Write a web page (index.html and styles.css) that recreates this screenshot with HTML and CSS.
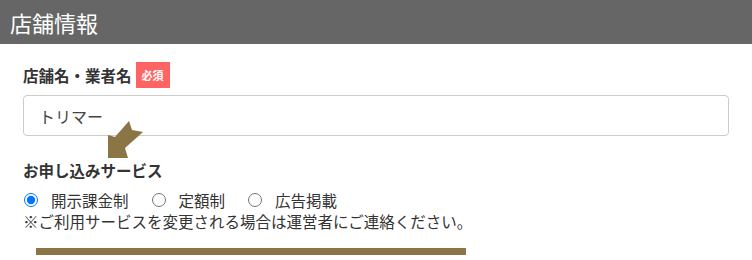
FILE: index.html
```html
<!DOCTYPE html>
<html lang="ja">
<head>
<meta charset="utf-8">
<title>店舗情報</title>
<link rel="stylesheet" href="styles.css">
</head>
<body>
<div class="panel">
  <div class="panel-header">店舗情報</div>
  <div class="panel-body">
    <div class="field-label">
      <span>店舗名・業者名</span>
      <span class="badge">必須</span>
    </div>
    <input class="text-input" type="text" value="トリマー">
    <div class="section-label">お申し込みサービス</div>
    <div class="radio-row">
      <label class="radio-item"><input type="radio" name="svc" checked><span>開示課金制</span></label>
      <label class="radio-item"><input type="radio" name="svc"><span>定額制</span></label>
      <label class="radio-item"><input type="radio" name="svc"><span>広告掲載</span></label>
    </div>
    <div class="note">※ご利用サービスを変更される場合は運営者にご連絡ください。</div>
    <div class="highlight-bar"></div>
    <svg class="arrow" width="42" height="44" viewBox="0 0 42 44">
      <polygon points="3,17 10,19 24,3 27,12 38,14 20,30 23,40 3,40" fill="#8c7545"/>
    </svg>
  </div>
</div>
</body>
</html>
```

FILE: styles.css
```css
html, body {
  margin: 0;
  padding: 0;
  background: #fff;
}
body {
  font-family: "Noto Sans CJK JP", "Noto Sans", sans-serif;
  color: #333;
}
.panel-header {
  height: 44px;
  line-height: 44px;
  background: #666;
  color: #fff;
  font-size: 22px;
  padding-left: 10px;
}
.panel-body {
  position: relative;
  padding: 18px 23px 0 23px;
}
.field-label {
  display: flex;
  align-items: center;
  height: 26px;
  gap: 4px;
  font-size: 15.5px;
  font-weight: bold;
}
.badge {
  display: inline-flex;
  align-items: center;
  justify-content: center;
  width: 34px;
  height: 26px;
  background: #ff6464;
  color: #fff;
  font-size: 11px;
  font-weight: bold;
}
.text-input {
  display: block;
  box-sizing: border-box;
  width: 100%;
  height: 41px;
  margin: 7px 0 0 0;
  padding: 0 15px;
  border: 1px solid #ccc;
  border-radius: 4px;
  font-family: inherit;
  font-size: 16px;
  color: #444;
  outline: none;
}
.section-label {
  margin-top: 24px;
  line-height: 20px;
  font-size: 15.5px;
  font-weight: bold;
}
.radio-row {
  display: flex;
  align-items: center;
  margin-top: 10px;
  height: 20px;
  font-size: 15.5px;
}
.radio-item {
  display: inline-flex;
  align-items: center;
  margin-right: 22px;
}
.radio-item input {
  width: 14px;
  height: 14px;
  margin: 0 13px 0 1px;
  accent-color: #0075ff;
}
.note {
  margin-top: 1px;
  line-height: 20px;
  font-size: 15.5px;
}
.highlight-bar {
  margin: 17px 0 0 13px;
  width: 430px;
  height: 7px;
  background: #8c7545;
}
.arrow {
  position: absolute;
  left: 105px;
  top: 74px;
}
```
